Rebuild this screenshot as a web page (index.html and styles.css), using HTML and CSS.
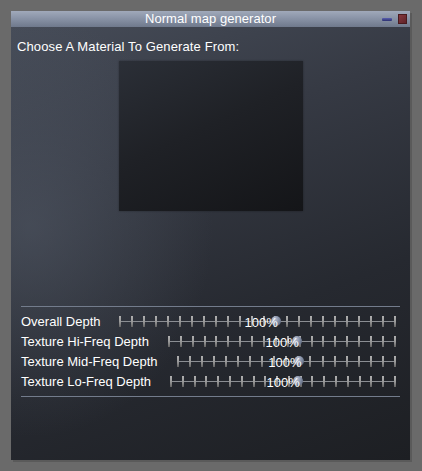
FILE: index.html
```html
<!DOCTYPE html>
<html>
<head>
<meta charset="utf-8">
<link rel="stylesheet" href="styles.css">
</head>
<body>
<div class="window">
  <div class="titlebar">
    <span class="title">Normal map generator</span>
    <span class="btn-min"></span>
    <span class="btn-close"></span>
  </div>
  <div class="body">
    <div class="prompt">Choose A Material To Generate From:</div>
    <div class="preview"></div>
    <div class="sliders">
      <div class="row">
        <span class="label">Overall Depth</span>
        <div class="slider">
          <div class="track"></div>
          <div class="ticks"><i></i><i></i><i></i><i></i><i></i><i></i><i></i><i></i><i></i><i></i><i></i><i></i><i></i><i></i><i></i><i></i><i></i><i></i><i></i><i></i><i></i><i></i><i></i><i></i></div>
          <div class="thumb" style="left:56.5%"><span class="value">100%</span></div>
        </div>
      </div>
      <div class="row">
        <span class="label">Texture Hi-Freq Depth</span>
        <div class="slider">
          <div class="track"></div>
          <div class="ticks"><i></i><i></i><i></i><i></i><i></i><i></i><i></i><i></i><i></i><i></i><i></i><i></i><i></i><i></i><i></i><i></i><i></i><i></i><i></i><i></i></div>
          <div class="thumb" style="left:56.5%"><span class="value">100%</span></div>
        </div>
      </div>
      <div class="row">
        <span class="label">Texture Mid-Freq Depth</span>
        <div class="slider">
          <div class="track"></div>
          <div class="ticks"><i></i><i></i><i></i><i></i><i></i><i></i><i></i><i></i><i></i><i></i><i></i><i></i><i></i><i></i><i></i><i></i><i></i><i></i><i></i></div>
          <div class="thumb" style="left:56%"><span class="value">100%</span></div>
        </div>
      </div>
      <div class="row">
        <span class="label">Texture Lo-Freq Depth</span>
        <div class="slider">
          <div class="track"></div>
          <div class="ticks"><i></i><i></i><i></i><i></i><i></i><i></i><i></i><i></i><i></i><i></i><i></i><i></i><i></i><i></i><i></i><i></i><i></i><i></i><i></i><i></i></div>
          <div class="thumb" style="left:56.5%"><span class="value">100%</span></div>
        </div>
      </div>
    </div>
  </div>
</div>
</body>
</html>
```
FILE: styles.css
```css
html, body {
  margin: 0;
  padding: 0;
}
body {
  background: #6a6a6a;
  font-family: "Liberation Sans", Arial, sans-serif;
  font-size: 13px;
  color: #ffffff;
  width: 422px;
  height: 471px;
  overflow: hidden;
}
.window {
  margin: 11px 0 0 11px;
  width: 399px;
  height: 449px;
  box-shadow: 2px 2px 0 #5a5a5a;
  display: flex;
  flex-direction: column;
}
.titlebar {
  position: relative;
  height: 16px;
  flex: none;
  background: linear-gradient(to bottom, #a0a9ba 0%, #8c96a9 40%, #6f798c 100%);
  text-align: center;
  line-height: 16px;
}
.title {
  color: #ffffff;
  font-size: 13px;
  letter-spacing: 0.05px;
}
.btn-min {
  position: absolute;
  left: 371px;
  top: 7px;
  width: 10px;
  height: 3px;
  background: linear-gradient(to bottom, #5a60b0, #2c3070);
  border-radius: 1px;
}
.btn-close {
  position: absolute;
  left: 387px;
  top: 3px;
  width: 9px;
  height: 10px;
  background: linear-gradient(135deg, #8a3a40, #5a2026);
  box-shadow: inset 0 0 0 1px #4a1a1e;
}
.body {
  flex: 1;
  background:
    radial-gradient(ellipse 260px 300px at 20px 200px, rgba(90,98,112,0.45), rgba(90,98,112,0) 70%),
    linear-gradient(160deg, #464c58 0%, #363a44 30%, #262930 65%, #1d1f23 100%);
  display: flex;
  flex-direction: column;
}
.prompt {
  margin: 12px 0 0 6px;
  line-height: 15px;
  height: 15px;
  letter-spacing: 0.12px;
}
.preview {
  margin: 7px 0 0 108px;
  width: 184px;
  height: 150px;
  background: linear-gradient(155deg, #2b2f37 0%, #1f2126 45%, #141518 100%);
  box-shadow: 0 0 2px rgba(0,0,0,0.35);
}
.sliders {
  margin: 95px 10px 0 10px;
  border-top: 1px solid #737c8c;
  border-bottom: 1px solid #737c8c;
  padding: 4px 0 5px 0;
}
.row {
  height: 20px;
  display: flex;
  align-items: center;
}
.label {
  white-space: nowrap;
  line-height: 15px;
}
.slider {
  position: relative;
  flex: 1;
  height: 20px;
  margin-left: 19px;
  margin-right: 4px;
}
.track {
  position: absolute;
  left: 0;
  right: 0;
  top: 10px;
  height: 1px;
  background: #8a8d92;
}
.ticks {
  position: absolute;
  left: 0;
  right: 0;
  top: 5px;
  height: 11px;
  display: flex;
  justify-content: space-between;
}
.ticks i {
  display: block;
  width: 2px;
  height: 11px;
  background: linear-gradient(to bottom, #b0b0b0 0%, #9a9a9a 50%, #626262 100%);
}
.thumb {
  position: absolute;
  top: 5px;
  width: 10px;
  height: 10px;
  margin-left: -5px;
  border-radius: 50%;
  background: radial-gradient(circle at 35% 30%, #c0c8da 0%, #8590a6 45%, #4a5266 100%);
}
.value {
  position: absolute;
  right: 3px;
  top: -1px;
  line-height: 15px;
  font-size: 13px;
  color: #ffffff;
  white-space: nowrap;
}
```
